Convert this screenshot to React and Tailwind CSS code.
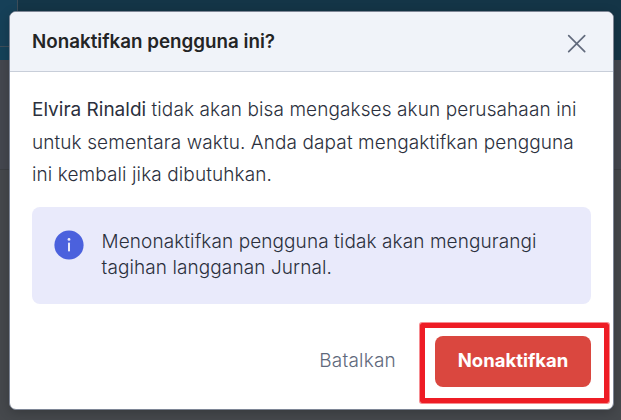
import React from 'react';

const CloseIcon = () => (
    <svg className="w-[20px] h-[20px]" viewBox="0 0 20 20" fill="none" stroke="#626b7d" strokeWidth="1.7" strokeLinecap="round">
        <path d="M1.7 1.7l16 16M17.7 1.7L1.7 17.7" />
    </svg>
);

const InfoIcon = () => (
    <svg className="w-[30px] h-[30px] shrink-0" viewBox="0 0 30 30">
        <circle cx="15" cy="15" r="14.6" fill="#4b61dd" />
        <circle cx="15" cy="9.4" r="1.4" fill="#e9eafb" />
        <rect x="14" y="12.6" width="2" height="9" rx="0.8" fill="#e9eafb" />
    </svg>
);

const PageBackdrop = () => (
    <div className="absolute inset-0 flex flex-col">
        <div className="h-[60px] flex bg-[#143547]">
            <div className="w-[18px] flex flex-col">
                <div className="h-[47px] bg-[#164058] border-r border-b border-[#3d4d59]" />
                <div className="flex-1 bg-[#154259]" />
            </div>
        </div>
        <div className="h-[110px] bg-[#44474f] border-b border-[#3c3f44]" />
        <div className="flex-1 bg-[#45484c]" />
    </div>
);

const App = () => {
    return (
        <div className="relative w-[621px] h-[420px] overflow-hidden font-['Inter',sans-serif]">
            <PageBackdrop />

            <div className="absolute left-[9px] top-[11px] w-[605px] h-[399px] bg-white rounded-[7px] border border-[#7e8696] overflow-hidden flex flex-col shadow-[0_3px_12px_rgba(0,0,0,0.2)]">
                <div className="h-[60px] shrink-0 flex items-center justify-between bg-[#f0f3f9] border-b border-[#c8ced9] pl-[22px] pr-[26px]">
                    <h2 className="pt-[2px] text-[18.8px] font-semibold text-[#232425] whitespace-nowrap">Nonaktifkan pengguna ini?</h2>
                    <button type="button" aria-label="Tutup" className="pt-[4px]">
                        <CloseIcon />
                    </button>
                </div>

                <div className="px-[22px] pt-[22px]">
                    <p className="text-[19px] leading-[32.5px] tracking-[0.1px] font-light text-[#2b303d] whitespace-nowrap">
                        <span className="font-normal tracking-normal">Elvira Rinaldi</span> tidak akan bisa mengakses akun perusahaan ini
                        <br />
                        untuk sementara waktu. Anda dapat mengaktifkan pengguna
                        <br />
                        ini kembali jika dibutuhkan.
                    </p>

                    <div className="mt-[15px] h-[97px] flex items-start gap-[17.5px] rounded-[8px] bg-[#e9eafb] pl-[22px] pt-[23px]">
                        <InfoIcon />
                        <p className="-mt-[1px] text-[19px] leading-[26px] tracking-[0.09px] font-light text-[#2b303d] whitespace-nowrap">
                            Menonaktifkan pengguna tidak akan mengurangi
                            <br />
                            tagihan langganan Jurnal.
                        </p>
                    </div>
                </div>

                <div className="mt-[32px] flex items-center justify-end gap-[39px] pr-[22px]">
                    <button type="button" className="text-[19px] tracking-[0.2px] font-light text-[#5f697c]">Batalkan</button>
                    <button type="button" className="w-[156px] h-[51px] rounded-[8px] bg-[#da473f] text-[18.5px] font-bold text-white">Nonaktifkan</button>
                </div>
            </div>

            {/* marker around the confirm button */}
            <div className="absolute left-[420px] top-[323px] w-[189px] h-[80px] border-[5px] border-[#ee1c25] rounded-[2px] shadow-[0_0_0_1px_rgba(238,28,37,0.5)]" />
        </div>
    );
};

export default App;
